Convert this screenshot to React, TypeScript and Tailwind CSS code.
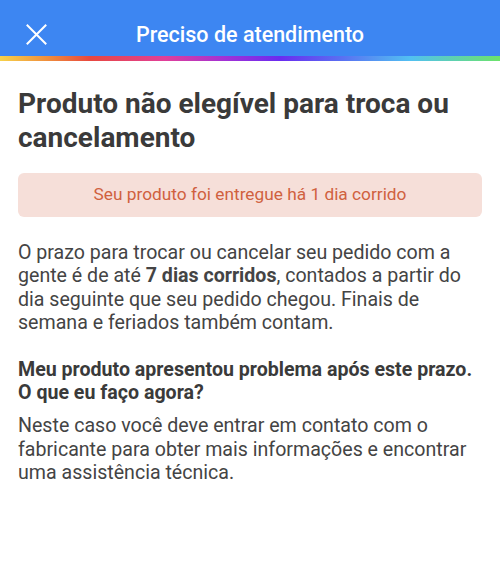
import React from "react";

export default function App() {
  return (
    <div className="w-[500px] h-[569px] bg-white overflow-hidden" style={{ fontFamily: "Roboto, 'Noto Sans', sans-serif" }}>
      <header className="relative h-14 bg-[#3d86f2] flex items-center justify-center pt-[13px]">
        <svg className="absolute left-[26px] top-[24px]" width="21" height="21" viewBox="0 0 21 21" fill="none" stroke="white" strokeWidth="2" strokeLinecap="square">
          <path d="M1.5 1.5 L19.5 19.5 M19.5 1.5 L1.5 19.5" />
        </svg>
        <h1 className="text-white text-[21.5px] font-medium leading-none">Preciso de atendimento</h1>
      </header>
      <div className="h-[5px] bg-[linear-gradient(90deg,#f7d24a_0%,#ef8a3c_10%,#e8483f_18%,#e13f9a_33%,#a231d6_45%,#6a2cf0_56%,#5a6ef2_68%,#52c0f2_82%,#6ce36a_100%)]" />
      <main className="px-[18px] pt-[26px]">
        <h2 className="text-[28px] leading-[34px] font-bold text-[#3a3a3a]">
          Produto não elegível para troca ou cancelamento
        </h2>
        <div className="mt-[18px] h-[44px] rounded-[6px] bg-[#f6dfd9] flex items-center justify-center">
          <span className="text-[17.3px] text-[#d0613f]">Seu produto foi entregue há 1 dia corrido</span>
        </div>
        <p className="mt-[24px] text-[19.6px] leading-[23.4px] text-[#444444]">
          O prazo para trocar ou cancelar seu pedido com a gente é de até <b className="font-bold">7 dias corridos</b>, contados a partir do dia seguinte que seu pedido chegou. Finais de semana e feriados também contam.
        </p>
        <h3 className="mt-[23px] text-[19.6px] leading-[23.4px] font-bold text-[#3a3a3a]">
          Meu produto apresentou problema após este prazo. O que eu faço agora?
        </h3>
        <p className="mt-[10px] text-[19.6px] leading-[23.4px] text-[#444444]">
          Neste caso você deve entrar em contato com o fabricante para obter mais informações e encontrar uma assistência técnica.
        </p>
      </main>
    </div>
  );
}
